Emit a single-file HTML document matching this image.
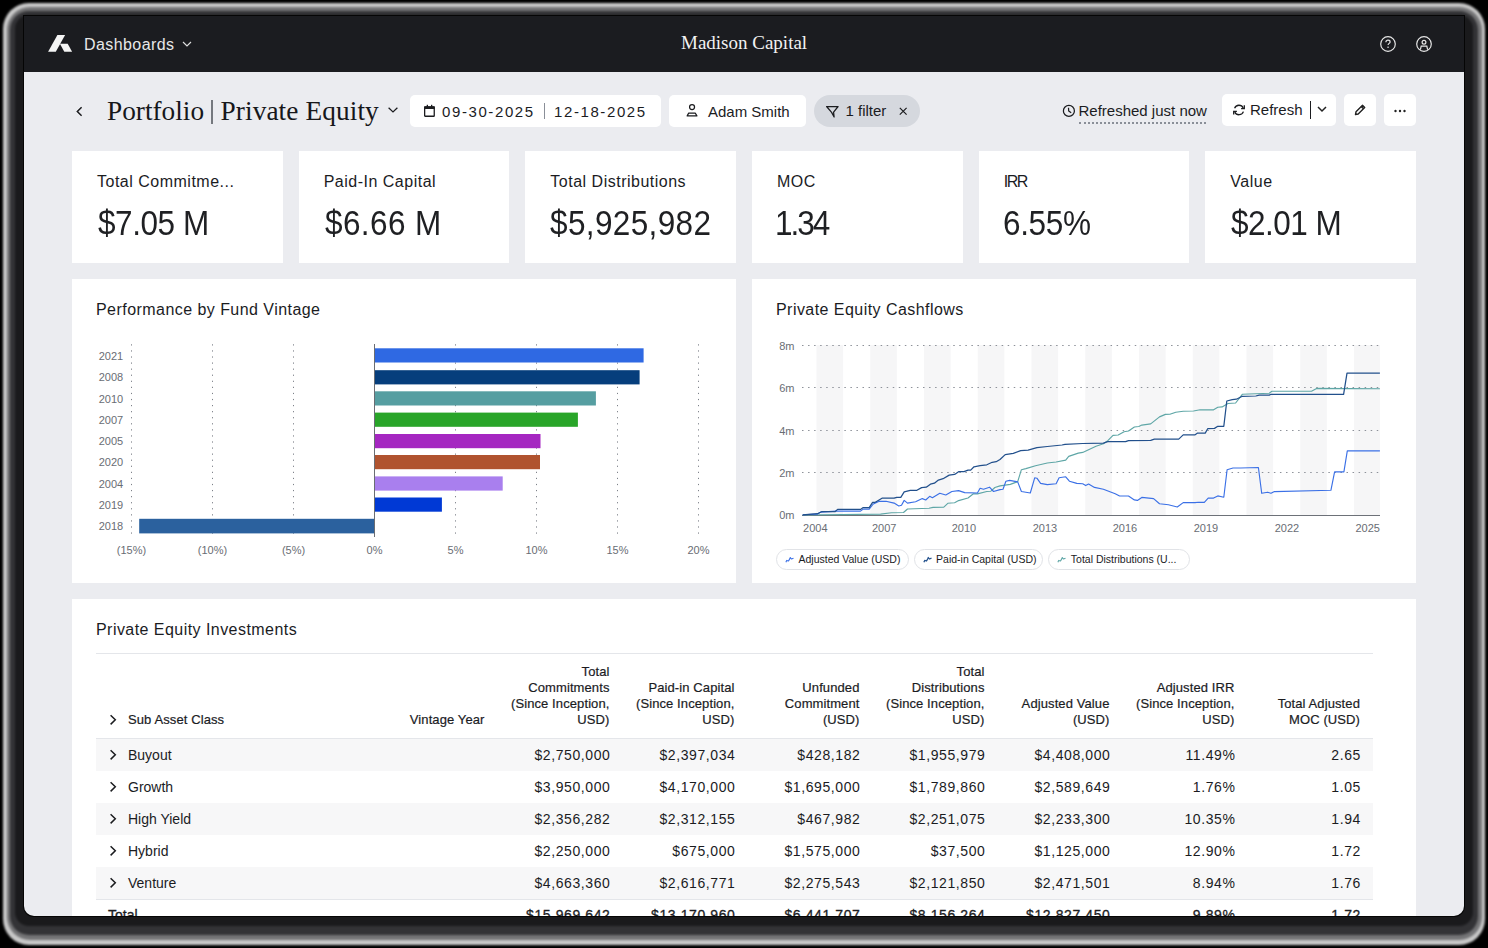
<!DOCTYPE html>
<html><head><meta charset="utf-8">
<style>
*{margin:0;padding:0;box-sizing:border-box}
html,body{width:1488px;height:948px;overflow:hidden;background:#000}
body{position:relative;font-family:"Liberation Sans",sans-serif;color:#1b1c1f}
.frame{position:absolute;left:3px;top:3px;width:1482px;height:942px;filter:blur(1px)}
.fr{position:absolute}
.win{position:absolute;left:24px;top:16px;width:1440px;height:900px;border-radius:0 0 10px 10px;overflow:hidden;background:#ebecf0;box-shadow:0 0 0 1px #050505}
.nav{position:absolute;left:0;top:0;width:1440px;height:56px;background:#1b1c20}
.abs{position:absolute;white-space:nowrap}
.card{position:absolute;background:#fff}
.kt{font-size:16px;color:#1b1c1f;letter-spacing:.5px}
.kv{font-size:35px;color:#1f2023;transform:scaleX(.9);transform-origin:0 0}
.ct{font-size:16px;color:#1b1c1f;letter-spacing:.45px}
.ax{font-family:"Liberation Sans",sans-serif;font-size:11px;fill:#696d74}
.pill{height:21.4px;border:1px solid #e1e3e7;border-radius:11px;font-size:10.5px;color:#1b1c1f;background:#fff}
.th{font-size:13px;line-height:16px;color:#1b1c1f;-webkit-text-stroke:.2px #1b1c1f;letter-spacing:.1px}
.td{font-size:14px;line-height:32px;color:#1b1c1f}
.num{letter-spacing:.6px;margin-left:1px}
.tot{-webkit-text-stroke:.3px #1b1c1f}
.btn{position:absolute;background:#fff;border-radius:5px;top:79px;height:32px}
</style></head>
<body>
<div class="frame">
  <div class="fr" style="left:0;top:0;right:0;bottom:0;border-radius:26px;background:#c8c8c8"></div>
  <div class="fr" style="left:3.5px;top:4px;right:3.5px;bottom:5px;border-radius:23px;background:#747476"></div>
  <div class="fr" style="left:7px;top:8px;right:7px;bottom:10px;border-radius:19px;background:#333336"></div>
  <div class="fr" style="left:12px;top:12px;right:12px;bottom:19px;border-radius:14px;background:#1a1a1c"></div>
</div>
<div class="win">
  <div class="nav">
    <svg class="abs" style="left:24px;top:19px" width="25" height="18" viewBox="48 35 25 18">
      <path d="M48.1 51.8 L57.4 35.1 L65.1 35.1 L55.8 51.8 Z" fill="#f5f5f5"/>
      <path d="M59.9 43.7 L67.7 43.7 L72.1 51.8 L64.3 51.8 Z" fill="#f5f5f5"/>
    </svg>
    <div class="abs" style="left:60px;top:20px;font-size:16px;letter-spacing:.42px;color:#e8e8e8">Dashboards</div>
    <svg class="abs" style="left:157px;top:24px" width="12" height="8" viewBox="0 0 12 8"><path d="M2 2 L6 6 L10 2" stroke="#ddd" stroke-width="1.15" fill="none"/></svg>
    <div class="abs" style="left:657px;top:16px;font-family:'Liberation Serif',serif;font-size:19px;color:#f2f2f2">Madison Capital</div>
    <svg class="abs" style="left:1355px;top:19px" width="18" height="18" viewBox="0 0 18 18"><circle cx="9" cy="9" r="7.3" stroke="#e6e6e6" stroke-width="1.2" fill="none"/><path d="M6.9 7.2 C6.9 5.9 7.9 5.2 9 5.2 C10.2 5.2 11.1 6 11.1 7 C11.1 8.3 9.1 8.5 9.1 10" stroke="#e6e6e6" stroke-width="1.2" fill="none"/><rect x="8.4" y="11.6" width="1.3" height="1.3" fill="#e6e6e6"/></svg>
    <svg class="abs" style="left:1391px;top:19px" width="18" height="18" viewBox="0 0 18 18"><circle cx="9" cy="9" r="7.3" stroke="#e6e6e6" stroke-width="1.2" fill="none"/><circle cx="9" cy="7.2" r="1.9" stroke="#e6e6e6" stroke-width="1.2" fill="none"/><path d="M5.4 14.6 L6.2 11.2 L11.8 11.2 L12.6 14.6" stroke="#e6e6e6" stroke-width="1.2" fill="none"/></svg>
  </div>

  <!-- header row -->
  <svg class="abs" style="left:50px;top:89px" width="10" height="12" viewBox="0 0 10 12"><path d="M7.6 2.2 L3.3 6.5 L7.6 10.8" stroke="#1b1c1f" stroke-width="1.5" fill="none"/></svg>
  <div class="abs" style="left:83px;top:79.7px;font-family:'Liberation Serif',serif;font-size:27.3px;color:#16171a">Portfolio</div>
  <div class="abs" style="left:187.3px;top:84px;width:1.5px;height:24px;background:#75787e"></div>
  <div class="abs" style="left:196.5px;top:79.7px;font-family:'Liberation Serif',serif;font-size:27.3px;letter-spacing:.1px;color:#16171a">Private Equity</div>
  <svg class="abs" style="left:363px;top:90px" width="12" height="8" viewBox="0 0 12 8"><path d="M1.6 1.8 L6 6 L10.4 1.8" stroke="#1b1c1f" stroke-width="1.25" fill="none"/></svg>
  <div class="btn" style="left:386px;width:251px"></div>
  <svg class="abs" style="left:399px;top:88px" width="14" height="15" viewBox="0 0 14 15"><rect x="1.65" y="2.85" width="9.6" height="9.4" rx="0.6" stroke="#1b1c1f" stroke-width="1.3" fill="none"/><rect x="1.2" y="2.4" width="10.5" height="2.6" fill="#1b1c1f"/><rect x="3.7" y="0.8" width="1.3" height="2.4" fill="#1b1c1f"/><rect x="8" y="0.8" width="1.3" height="2.4" fill="#1b1c1f"/></svg>
  <div class="abs" style="left:418px;top:87px;font-size:15px;letter-spacing:1.6px;color:#1b1c1f">09-30-2025</div>
  <div class="abs" style="left:520px;top:87px;width:1px;height:16px;background:#8a8f98"></div>
  <div class="abs" style="left:530px;top:87px;font-size:15px;letter-spacing:1.6px;color:#1b1c1f">12-18-2025</div>
  <div class="btn" style="left:645px;width:137px"></div>
  <svg class="abs" style="left:661px;top:87px" width="15" height="15" viewBox="0 0 15 15"><circle cx="7.05" cy="4" r="2.5" stroke="#1b1c1f" stroke-width="1.25" fill="none"/><path d="M3.7 10 L10.2 10 L11.9 12.9 L2.2 12.9 Z" stroke="#1b1c1f" stroke-width="1.25" fill="none" stroke-linejoin="round"/></svg>
  <div class="abs" style="left:684px;top:87px;font-size:15px;color:#1b1c1f">Adam Smith</div>
  <div class="abs" style="left:790px;top:79px;width:106px;height:32px;border-radius:16px;background:#d5d8de"></div>
  <svg class="abs" style="left:801px;top:88px" width="15" height="15" viewBox="0 0 15 15"><path d="M1.6 2.5 L13.1 2.5 L8.6 8.2 L9.1 13 L6.6 8.4 Z" stroke="#1b1c1f" stroke-width="1.25" fill="none" stroke-linejoin="round"/></svg>
  <div class="abs" style="left:821.5px;top:86.3px;font-size:15px;color:#1b1c1f">1 filter</div>
  <svg class="abs" style="left:874px;top:90px" width="10" height="10" viewBox="0 0 10 10"><path d="M1.8 1.8 L8.6 8.6 M8.6 1.8 L1.8 8.6" stroke="#1b1c1f" stroke-width="1.2"/></svg>
  <svg class="abs" style="left:1038px;top:88px" width="14" height="14" viewBox="0 0 14 14"><circle cx="6.9" cy="6.9" r="5.5" stroke="#1b1c1f" stroke-width="1.25" fill="none"/><path d="M6.5 3.8 L6.7 6.9 L9.2 8.7" stroke="#1b1c1f" stroke-width="1.25" fill="none" stroke-linejoin="round"/></svg>
  <div class="abs" style="left:1054.5px;top:86px;font-size:15px;color:#1b1c1f">Refreshed just now</div>
  <div class="abs" style="left:1055px;top:106px;width:127px;height:0;border-top:2px dotted #8a8f98"></div>
  <div class="btn" style="left:1198px;width:114px;top:78px"></div>
  <svg class="abs" style="left:1208px;top:86px" width="14" height="14" viewBox="0 0 14 14"><path d="M2.6 6.3 A4.6 4.6 0 0 1 11.2 6.1 M11.4 9.6 A4.6 4.6 0 0 1 2.8 9.9" stroke="#1b1c1f" stroke-width="1.3" fill="none"/><path d="M12.3 3.3 L12.3 6.6 L9.1 6.6 M1.7 12.6 L1.7 9.3 L4.9 9.3" stroke="#1b1c1f" stroke-width="1.3" fill="none"/></svg>
  <div class="abs" style="left:1226px;top:85px;font-size:15px;color:#1b1c1f">Refresh</div>
  <div class="abs" style="left:1285.5px;top:85px;width:1.2px;height:18px;background:#1b1c1f"></div>
  <svg class="abs" style="left:1292px;top:89px" width="12" height="8" viewBox="0 0 12 8"><path d="M2 2 L6 6 L10 2" stroke="#222" stroke-width="1.5" fill="none"/></svg>
  <div class="btn" style="left:1320px;width:32px;top:78px"></div>
  <svg class="abs" style="left:1329px;top:87px" width="14" height="14" viewBox="0 0 14 14"><path d="M2.5 11.5 L3 8.8 L9.5 2.3 L11.7 4.5 L5.2 11 Z M8.2 3.6 L10.4 5.8" stroke="#222" stroke-width="1.4" fill="none" stroke-linejoin="round"/></svg>
  <div class="btn" style="left:1360px;width:32px;top:78px"></div>
  <svg class="abs" style="left:1368px;top:92px" width="16" height="6" viewBox="0 0 16 6"><circle cx="3.5" cy="3" r="1.2" fill="#222"/><circle cx="8" cy="3" r="1.2" fill="#222"/><circle cx="12.5" cy="3" r="1.2" fill="#222"/></svg>
  <div class="card" style="left:48.00px;top:135px;width:210.67px;height:112px">
    <div class="abs kt" style="left:25px;top:21.8px">Total Commitme...</div>
    <div class="abs kv" style="left:26px;top:52.3px;letter-spacing:-0.5px">$7.05 M</div>
  </div>
  <div class="card" style="left:274.67px;top:135px;width:210.67px;height:112px">
    <div class="abs kt" style="left:25px;top:21.8px">Paid-In Capital</div>
    <div class="abs kv" style="left:26px;top:52.3px;letter-spacing:0.44px">$6.66 M</div>
  </div>
  <div class="card" style="left:501.33px;top:135px;width:210.67px;height:112px">
    <div class="abs kt" style="left:25px;top:21.8px">Total Distributions</div>
    <div class="abs kv" style="left:25px;top:52.3px;letter-spacing:0.41px">$5,925,982</div>
  </div>
  <div class="card" style="left:728.00px;top:135px;width:210.67px;height:112px">
    <div class="abs kt" style="left:25px;top:21.8px">MOC</div>
    <div class="abs kv" style="left:23.2px;top:52.3px;letter-spacing:-2.22px">1.34</div>
  </div>
  <div class="card" style="left:954.67px;top:135px;width:210.67px;height:112px">
    <div class="abs kt" style="left:25px;top:21.8px;letter-spacing:-1.4px">IRR</div>
    <div class="abs kv" style="left:24px;top:52.3px;letter-spacing:-0.39px">6.55%</div>
  </div>
  <div class="card" style="left:1181.33px;top:135px;width:210.67px;height:112px">
    <div class="abs kt" style="left:25px;top:21.8px">Value</div>
    <div class="abs kv" style="left:25.5px;top:52.3px;letter-spacing:-0.56px">$2.01 M</div>
  </div>
  <div class="card" style="left:48px;top:263px;width:664px;height:304px">
    <svg class="abs" style="left:0;top:0" width="664" height="304" viewBox="72 279 664 304">
<line x1="131.5" y1="344.3" x2="131.5" y2="534" stroke="#7d8189" stroke-width="1" stroke-dasharray="1.2 4.87"/>
<line x1="212.5" y1="344.3" x2="212.5" y2="534" stroke="#7d8189" stroke-width="1" stroke-dasharray="1.2 4.87"/>
<line x1="293.5" y1="344.3" x2="293.5" y2="534" stroke="#7d8189" stroke-width="1" stroke-dasharray="1.2 4.87"/>
<line x1="455.5" y1="344.3" x2="455.5" y2="534" stroke="#7d8189" stroke-width="1" stroke-dasharray="1.2 4.87"/>
<line x1="536.5" y1="344.3" x2="536.5" y2="534" stroke="#7d8189" stroke-width="1" stroke-dasharray="1.2 4.87"/>
<line x1="617.5" y1="344.3" x2="617.5" y2="534" stroke="#7d8189" stroke-width="1" stroke-dasharray="1.2 4.87"/>
<line x1="698.5" y1="344.3" x2="698.5" y2="534" stroke="#7d8189" stroke-width="1" stroke-dasharray="1.2 4.87"/>
<rect x="374.5" y="348.3" width="269.1" height="14.2" fill="#2f69e3"/>
<text x="123.2" y="359.5" text-anchor="end" class="ax">2021</text>
<rect x="374.5" y="370.2" width="265.1" height="14.2" fill="#063e7c"/>
<text x="123.2" y="381.4" text-anchor="end" class="ax">2008</text>
<rect x="374.5" y="391.3" width="221.4" height="14.2" fill="#569ea1"/>
<text x="123.2" y="402.5" text-anchor="end" class="ax">2010</text>
<rect x="374.5" y="412.6" width="203.4" height="14.2" fill="#29a529"/>
<text x="123.2" y="423.8" text-anchor="end" class="ax">2007</text>
<rect x="374.5" y="434" width="166.0" height="14.2" fill="#a527c1"/>
<text x="123.2" y="445.2" text-anchor="end" class="ax">2005</text>
<rect x="374.5" y="455" width="165.5" height="14.2" fill="#b0532f"/>
<text x="123.2" y="466.2" text-anchor="end" class="ax">2020</text>
<rect x="374.5" y="476.4" width="128.2" height="14.2" fill="#a97fee"/>
<text x="123.2" y="487.6" text-anchor="end" class="ax">2004</text>
<rect x="374.5" y="497.5" width="67.4" height="14.2" fill="#0039d5"/>
<text x="123.2" y="508.7" text-anchor="end" class="ax">2019</text>
<rect x="139.2" y="518.8" width="235.3" height="14.6" fill="#2b619e"/>
<text x="123.2" y="530.0" text-anchor="end" class="ax">2018</text>
<line x1="374.5" y1="344" x2="374.5" y2="537" stroke="#6a6d73" stroke-width="1"/>
<text x="131.5" y="554" text-anchor="middle" class="ax">(15%)</text>
<text x="212.5" y="554" text-anchor="middle" class="ax">(10%)</text>
<text x="293.5" y="554" text-anchor="middle" class="ax">(5%)</text>
<text x="374.5" y="554" text-anchor="middle" class="ax">0%</text>
<text x="455.5" y="554" text-anchor="middle" class="ax">5%</text>
<text x="536.5" y="554" text-anchor="middle" class="ax">10%</text>
<text x="617.5" y="554" text-anchor="middle" class="ax">15%</text>
<text x="698.5" y="554" text-anchor="middle" class="ax">20%</text>
</svg>
    <div class="abs ct" style="left:24px;top:21.5px">Performance by Fund Vintage</div>
  </div>
  <div class="card" style="left:728px;top:263px;width:664px;height:304px">
    <svg class="abs" style="left:0;top:0" width="664" height="304" viewBox="752 279 664 304">
<rect x="816.50" y="345" width="26.60" height="170" fill="#f6f6f7"/>
<rect x="870.25" y="345" width="26.60" height="170" fill="#f6f6f7"/>
<rect x="924.00" y="345" width="26.60" height="170" fill="#f6f6f7"/>
<rect x="977.75" y="345" width="26.60" height="170" fill="#f6f6f7"/>
<rect x="1031.50" y="345" width="26.60" height="170" fill="#f6f6f7"/>
<rect x="1085.25" y="345" width="26.60" height="170" fill="#f6f6f7"/>
<rect x="1139.00" y="345" width="26.60" height="170" fill="#f6f6f7"/>
<rect x="1192.75" y="345" width="26.60" height="170" fill="#f6f6f7"/>
<rect x="1246.50" y="345" width="26.60" height="170" fill="#f6f6f7"/>
<rect x="1300.25" y="345" width="26.60" height="170" fill="#f6f6f7"/>
<rect x="1354.00" y="345" width="26.00" height="170" fill="#f6f6f7"/>
<line x1="802" y1="345.5" x2="1380" y2="345.5" stroke="#8d9199" stroke-width="1" stroke-dasharray="1.5 4.55"/>
<text x="794.5" y="349.5" text-anchor="end" class="ax">8m</text>
<line x1="802" y1="387.5" x2="1380" y2="387.5" stroke="#8d9199" stroke-width="1" stroke-dasharray="1.5 4.55"/>
<text x="794.5" y="391.5" text-anchor="end" class="ax">6m</text>
<line x1="802" y1="430.5" x2="1380" y2="430.5" stroke="#8d9199" stroke-width="1" stroke-dasharray="1.5 4.55"/>
<text x="794.5" y="434.5" text-anchor="end" class="ax">4m</text>
<line x1="802" y1="472.5" x2="1380" y2="472.5" stroke="#8d9199" stroke-width="1" stroke-dasharray="1.5 4.55"/>
<text x="794.5" y="476.5" text-anchor="end" class="ax">2m</text>
<text x="794.5" y="519" text-anchor="end" class="ax">0m</text>
<line x1="802" y1="515.5" x2="1380" y2="515.5" stroke="#6d7178" stroke-width="1"/>
<text x="815.3" y="532.3" text-anchor="middle" class="ax">2004</text>
<text x="884.2" y="532.3" text-anchor="middle" class="ax">2007</text>
<text x="963.9" y="532.3" text-anchor="middle" class="ax">2010</text>
<text x="1044.9" y="532.3" text-anchor="middle" class="ax">2013</text>
<text x="1125" y="532.3" text-anchor="middle" class="ax">2016</text>
<text x="1206" y="532.3" text-anchor="middle" class="ax">2019</text>
<text x="1287" y="532.3" text-anchor="middle" class="ax">2022</text>
<text x="1367.7" y="532.3" text-anchor="middle" class="ax">2025</text>
<polyline points="802.7,515 880.6,514.1 891.4,512.7 903.5,512.5 907.5,509 929,508.3 933.1,507.4 943.8,507.1 947.8,503.3 954.6,502.7 958.6,500.6 968,498 973.4,493.7 977.4,493.9 986.8,491.5 990.9,491.2 994.9,487.5 1000,485.9 1010.3,484.4 1017.7,481.6 1021.4,469.7 1025.9,468.6 1035.5,465.7 1047.3,463 1056.1,462 1065.7,460.1 1068.7,456.4 1078.3,453.1 1082.7,452.4 1096,446.2 1103.4,443.8 1107.8,440.6 1113,435.4 1118.2,435 1124.1,431.7 1128.5,431 1134.4,427 1138.8,426.5 1141.8,425.1 1150.7,423.9 1159.5,416.9 1165.4,414.4 1169.9,414.3 1175.8,412.2 1183.2,411.3 1193.5,411 1200.1,409.8 1213.6,409.8 1217.8,407.3 1222.1,406.9 1228,403.5 1235.6,403 1242.3,394.3 1269.3,393.2 1271.9,391.2 1311.5,391.2 1316.6,388.4 1379.9,388.7" fill="none" stroke="#5ea6a6" stroke-width="1.15" stroke-linejoin="round"/>
<polyline points="802.7,514.8 817.5,514.1 820.8,512.1 836.3,511.1 860.5,511.1 863.2,509.1 869.2,509.1 873.3,504 879.3,501.3 886,501.3 894.1,503.1 898.8,506 901.5,505.3 904.2,500.4 907.5,503.1 915.6,501.7 922.3,498.6 925.7,500 929.7,496.3 932.4,497.7 939.8,493.3 945.8,495 951.9,491.5 958.6,490.6 964.7,492.6 977.4,493 980.1,488.3 983.5,489.2 989.5,487.2 993.5,491.5 1000,489.6 1003,489.3 1005.9,481.3 1009.6,480.4 1017.7,481.9 1021.4,491.5 1030.3,493 1034.7,477.8 1036.9,478.2 1040.6,483.4 1047.3,484.6 1056.1,483.8 1059.1,477.8 1065.7,476.8 1069.4,481.2 1076.8,483.4 1082.7,483.8 1085.7,485.6 1088.6,484.1 1094.5,487.4 1103.4,489.3 1115.2,493.7 1119.6,496 1128.5,496 1134.4,499.9 1137.4,500.4 1141.8,497.4 1153.6,498.6 1159.5,503.8 1168.4,504.8 1177.3,507 1183.2,502.6 1195,502.6 1198.4,502.3 1204.3,502.3 1208.2,498.1 1213.6,498.1 1217.8,495.9 1223.8,497.2 1227.1,469.7 1233,468 1240.6,468 1258.4,467.5 1261.7,493.3 1267.6,492.2 1271,493.3 1274.4,491.6 1330.9,490.3 1334.6,471.9 1343.9,471.9 1347.3,450.8 1379.9,450.8" fill="none" stroke="#3b70e6" stroke-width="1.15" stroke-linejoin="round"/>
<polyline points="802.7,514.8 817.5,513.7 821.5,511.7 835,511.7 837.6,509.4 860.5,509.4 863.2,507.6 869.2,507.6 872.6,502.3 875.3,502.3 882,498.2 894.1,498.2 896.8,497.3 900.8,497.3 904.2,491.9 910.2,490.3 916.9,490.3 921.6,487.6 926.3,487.2 930.4,484.2 934.4,483.2 938.4,480.1 943.1,478.7 949.2,475.1 954.6,474.4 958.6,471.7 964,471.7 968,470.1 970.7,470.1 974,466.8 980.1,465.7 986.8,464.8 992.2,462.3 996.2,461.7 1000,459.5 1005.2,454.6 1013.3,453.4 1020.7,450.6 1028.1,450.2 1036.9,447.7 1047.3,446.5 1062,445 1065,444.3 1082.7,443.5 1103.4,443.2 1107.8,441.7 1125.6,441.7 1128.5,440.6 1150.7,440.3 1154.4,439.1 1178.7,439.1 1183.2,434.9 1195.1,434.8 1197.6,433.1 1205.2,433.1 1207.7,428.7 1214.5,428.4 1217.8,426.3 1223.8,426.3 1226.8,401 1232.2,399.7 1236.4,399.2 1242.3,396.3 1255.8,396 1259.2,395.1 1269.3,395.1 1271,394.3 1343.6,394.3 1347,373.2 1379.9,373.2" fill="none" stroke="#22508c" stroke-width="1.25" stroke-linejoin="round"/>
</svg>
    <div class="abs ct" style="left:24px;top:21.5px">Private Equity Cashflows</div>
    <div class="abs pill" style="left:24px;top:270px;width:133px"><svg class="abs" style="left:8px;top:6px" width="10" height="8" viewBox="0 0 10 8"><path d="M0.9 6.3 L1.7 4.4 L3.5 5 L4.6 3.1 L5.3 1.5 L6.4 3 L8.5 2.2" stroke="#3b70e6" stroke-width="1.1" fill="none" stroke-linejoin="round"/></svg><span class="abs" style="left:21.5px;top:3px">Adjusted Value (USD)</span></div><div class="abs pill" style="left:161.6px;top:270px;width:129.5px"><svg class="abs" style="left:8px;top:6px" width="10" height="8" viewBox="0 0 10 8"><path d="M0.9 6.3 L1.7 4.4 L3.5 5 L4.6 3.1 L5.3 1.5 L6.4 3 L8.5 2.2" stroke="#22508c" stroke-width="1.25" fill="none" stroke-linejoin="round"/></svg><span class="abs" style="left:21.5px;top:3px">Paid-in Capital (USD)</span></div><div class="abs pill" style="left:296.3px;top:270px;width:142.2px"><svg class="abs" style="left:8px;top:6px" width="10" height="8" viewBox="0 0 10 8"><path d="M0.9 6.3 L1.7 4.4 L3.5 5 L4.6 3.1 L5.3 1.5 L6.4 3 L8.5 2.2" stroke="#5ea6a6" stroke-width="1.1" fill="none" stroke-linejoin="round"/></svg><span class="abs" style="left:21.5px;top:3px">Total Distributions (U...</span></div>
  </div>
<div class="card" style="left:48px;top:583px;width:1344px;height:400px">
<div class="abs ct" style="left:24px;top:21.5px">Private Equity Investments</div>
<div class="abs" style="left:24px;top:54px;width:1277px;height:1px;background:#e4e6ea"></div>
<svg class="abs" style="left:37px;top:115px" width="10" height="12" viewBox="0 0 10 12"><path d="M1.6 1.2 L6.3 5.8 L1.6 10.4" stroke="#1b1c1f" stroke-width="1.5" fill="none"/></svg>
<div class="abs th" style="left:56px;top:112.5px">Sub Asset Class</div>
<div class="abs th" style="left:252.5px;top:112.5px;width:160px;text-align:right">Vintage Year</div>
<div class="abs th" style="left:377.5px;top:64.5px;width:160px;text-align:right">Total<br>Commitments<br>(Since Inception,<br>USD)</div>
<div class="abs th" style="left:502.5px;top:80.5px;width:160px;text-align:right">Paid-in Capital<br>(Since Inception,<br>USD)</div>
<div class="abs th" style="left:627.5px;top:80.5px;width:160px;text-align:right">Unfunded<br>Commitment<br>(USD)</div>
<div class="abs th" style="left:752.5px;top:64.5px;width:160px;text-align:right">Total<br>Distributions<br>(Since Inception,<br>USD)</div>
<div class="abs th" style="left:877.5px;top:96.5px;width:160px;text-align:right">Adjusted Value<br>(USD)</div>
<div class="abs th" style="left:1002.5px;top:80.5px;width:160px;text-align:right">Adjusted IRR<br>(Since Inception,<br>USD)</div>
<div class="abs th" style="left:1128px;top:96.5px;width:160px;text-align:right">Total Adjusted<br>MOC (USD)</div>
<div class="abs" style="left:24px;top:139px;width:1277px;height:1px;background:#e4e6ea"></div>
<div class="abs tr" style="left:24px;top:140px;width:1277px;height:32px;background:#f7f7f8">
<svg class="abs" style="left:13px;top:10.3px" width="10" height="12" viewBox="0 0 10 12"><path d="M1.6 1.2 L6.3 5.8 L1.6 10.4" stroke="#1b1c1f" stroke-width="1.5" fill="none"/></svg>
<div class="abs td" style="left:32px;top:0">Buyout</div>
<div class="abs td num" style="left:373.5px;top:0;width:140px;text-align:right">$2,750,000</div>
<div class="abs td num" style="left:498.5px;top:0;width:140px;text-align:right">$2,397,034</div>
<div class="abs td num" style="left:623.5px;top:0;width:140px;text-align:right">$428,182</div>
<div class="abs td num" style="left:748.5px;top:0;width:140px;text-align:right">$1,955,979</div>
<div class="abs td num" style="left:873.5px;top:0;width:140px;text-align:right">$4,408,000</div>
<div class="abs td num" style="left:998.5px;top:0;width:140px;text-align:right">11.49%</div>
<div class="abs td num" style="left:1124px;top:0;width:140px;text-align:right">2.65</div>
</div>
<div class="abs tr" style="left:24px;top:172px;width:1277px;height:32px;background:#fff">
<svg class="abs" style="left:13px;top:10.3px" width="10" height="12" viewBox="0 0 10 12"><path d="M1.6 1.2 L6.3 5.8 L1.6 10.4" stroke="#1b1c1f" stroke-width="1.5" fill="none"/></svg>
<div class="abs td" style="left:32px;top:0">Growth</div>
<div class="abs td num" style="left:373.5px;top:0;width:140px;text-align:right">$3,950,000</div>
<div class="abs td num" style="left:498.5px;top:0;width:140px;text-align:right">$4,170,000</div>
<div class="abs td num" style="left:623.5px;top:0;width:140px;text-align:right">$1,695,000</div>
<div class="abs td num" style="left:748.5px;top:0;width:140px;text-align:right">$1,789,860</div>
<div class="abs td num" style="left:873.5px;top:0;width:140px;text-align:right">$2,589,649</div>
<div class="abs td num" style="left:998.5px;top:0;width:140px;text-align:right">1.76%</div>
<div class="abs td num" style="left:1124px;top:0;width:140px;text-align:right">1.05</div>
</div>
<div class="abs tr" style="left:24px;top:204px;width:1277px;height:32px;background:#f7f7f8">
<svg class="abs" style="left:13px;top:10.3px" width="10" height="12" viewBox="0 0 10 12"><path d="M1.6 1.2 L6.3 5.8 L1.6 10.4" stroke="#1b1c1f" stroke-width="1.5" fill="none"/></svg>
<div class="abs td" style="left:32px;top:0">High Yield</div>
<div class="abs td num" style="left:373.5px;top:0;width:140px;text-align:right">$2,356,282</div>
<div class="abs td num" style="left:498.5px;top:0;width:140px;text-align:right">$2,312,155</div>
<div class="abs td num" style="left:623.5px;top:0;width:140px;text-align:right">$467,982</div>
<div class="abs td num" style="left:748.5px;top:0;width:140px;text-align:right">$2,251,075</div>
<div class="abs td num" style="left:873.5px;top:0;width:140px;text-align:right">$2,233,300</div>
<div class="abs td num" style="left:998.5px;top:0;width:140px;text-align:right">10.35%</div>
<div class="abs td num" style="left:1124px;top:0;width:140px;text-align:right">1.94</div>
</div>
<div class="abs tr" style="left:24px;top:236px;width:1277px;height:32px;background:#fff">
<svg class="abs" style="left:13px;top:10.3px" width="10" height="12" viewBox="0 0 10 12"><path d="M1.6 1.2 L6.3 5.8 L1.6 10.4" stroke="#1b1c1f" stroke-width="1.5" fill="none"/></svg>
<div class="abs td" style="left:32px;top:0">Hybrid</div>
<div class="abs td num" style="left:373.5px;top:0;width:140px;text-align:right">$2,250,000</div>
<div class="abs td num" style="left:498.5px;top:0;width:140px;text-align:right">$675,000</div>
<div class="abs td num" style="left:623.5px;top:0;width:140px;text-align:right">$1,575,000</div>
<div class="abs td num" style="left:748.5px;top:0;width:140px;text-align:right">$37,500</div>
<div class="abs td num" style="left:873.5px;top:0;width:140px;text-align:right">$1,125,000</div>
<div class="abs td num" style="left:998.5px;top:0;width:140px;text-align:right">12.90%</div>
<div class="abs td num" style="left:1124px;top:0;width:140px;text-align:right">1.72</div>
</div>
<div class="abs tr" style="left:24px;top:268px;width:1277px;height:32px;background:#f7f7f8">
<svg class="abs" style="left:13px;top:10.3px" width="10" height="12" viewBox="0 0 10 12"><path d="M1.6 1.2 L6.3 5.8 L1.6 10.4" stroke="#1b1c1f" stroke-width="1.5" fill="none"/></svg>
<div class="abs td" style="left:32px;top:0">Venture</div>
<div class="abs td num" style="left:373.5px;top:0;width:140px;text-align:right">$4,663,360</div>
<div class="abs td num" style="left:498.5px;top:0;width:140px;text-align:right">$2,616,771</div>
<div class="abs td num" style="left:623.5px;top:0;width:140px;text-align:right">$2,275,543</div>
<div class="abs td num" style="left:748.5px;top:0;width:140px;text-align:right">$2,121,850</div>
<div class="abs td num" style="left:873.5px;top:0;width:140px;text-align:right">$2,471,501</div>
<div class="abs td num" style="left:998.5px;top:0;width:140px;text-align:right">8.94%</div>
<div class="abs td num" style="left:1124px;top:0;width:140px;text-align:right">1.76</div>
</div>
<div class="abs" style="left:24px;top:300px;width:1277px;height:1px;background:#e4e6ea"></div>
<div class="abs tr" style="left:24px;top:300px;width:1277px;height:32px">
<div class="abs td tot" style="left:12px;top:0">Total</div>
<div class="abs td num tot" style="left:373.5px;top:0;width:140px;text-align:right">$15,969,642</div>
<div class="abs td num tot" style="left:498.5px;top:0;width:140px;text-align:right">$13,170,960</div>
<div class="abs td num tot" style="left:623.5px;top:0;width:140px;text-align:right">$6,441,707</div>
<div class="abs td num tot" style="left:748.5px;top:0;width:140px;text-align:right">$8,156,264</div>
<div class="abs td num tot" style="left:873.5px;top:0;width:140px;text-align:right">$12,827,450</div>
<div class="abs td num tot" style="left:998.5px;top:0;width:140px;text-align:right">9.89%</div>
<div class="abs td num tot" style="left:1124px;top:0;width:140px;text-align:right">1.72</div>
</div>
</div>
</div>
</body></html>
